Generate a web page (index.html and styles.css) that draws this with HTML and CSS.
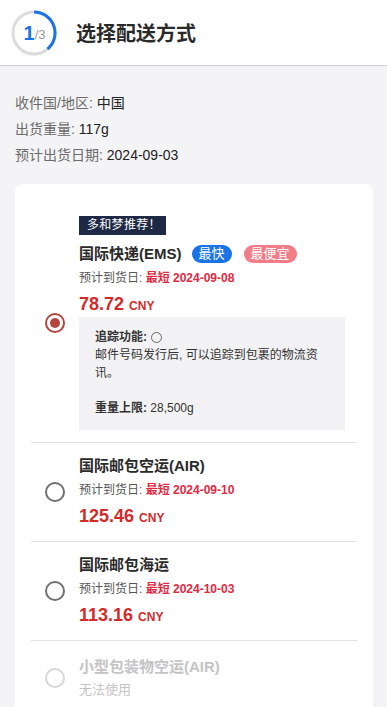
FILE: index.html
```html
<!DOCTYPE html>
<html lang="zh-CN">
<head>
<meta charset="utf-8">
<title>选择配送方式</title>
<link rel="stylesheet" href="styles.css">
</head>
<body>
<header class="header">
  <div class="step">
    <svg class="ring" width="46" height="46" viewBox="0 0 46 46">
      <circle cx="23" cy="23" r="21" fill="none" stroke="#dcdcdc" stroke-width="3"/>
      <path d="M23 2 A21 21 0 0 1 36.5 39.1" fill="none" stroke="#1a73e8" stroke-width="3"/>
    </svg>
    <span class="step-num"><b>1</b><i>/3</i></span>
  </div>
  <h1 class="title">选择配送方式</h1>
</header>
<main class="main">
  <div class="info">
    <p><span class="lbl">收件国/地区: </span>中国</p>
    <p><span class="lbl">出货重量: </span>117g</p>
    <p><span class="lbl">预计出货日期: </span>2024-09-03</p>
  </div>
  <section class="card">
    <div class="opt opt-first">
      <span class="radio radio-on"></span>
      <div class="opt-body">
        <div class="reco">多和梦推荐！</div>
        <div class="opt-title">国际快递(EMS)<span class="tag tag-blue">最快</span><span class="tag tag-pink">最便宜</span></div>
        <div class="eta">预计到货日: <em>最短 2024-09-08</em></div>
        <div class="price">78.72 <small>CNY</small></div>
        <div class="detail">
          <p class="d-head"><b>追踪功能:</b> <span class="circle"></span></p>
          <p class="d-text">邮件号码发行后, 可以追踪到包裹的物流资讯。</p>
          <p class="d-limit"><b>重量上限:</b> 28,500g</p>
        </div>
      </div>
    </div>
    <div class="opt">
      <span class="radio"></span>
      <div class="opt-body">
        <div class="opt-title">国际邮包空运(AIR)</div>
        <div class="eta">预计到货日: <em>最短 2024-09-10</em></div>
        <div class="price">125.46 <small>CNY</small></div>
      </div>
    </div>
    <div class="opt">
      <span class="radio"></span>
      <div class="opt-body">
        <div class="opt-title">国际邮包海运</div>
        <div class="eta">预计到货日: <em>最短 2024-10-03</em></div>
        <div class="price">113.16 <small>CNY</small></div>
      </div>
    </div>
    <div class="opt opt-disabled">
      <span class="radio"></span>
      <div class="opt-body">
        <div class="opt-title">小型包装物空运(AIR)</div>
        <div class="na">无法使用</div>
      </div>
    </div>
  </section>
</main>
</body>
</html>
```

FILE: styles.css
```css
* { box-sizing: border-box; }
html, body { margin: 0; padding: 0; }
body {
  font-family: "Liberation Sans", "Noto Sans CJK SC", Arial, sans-serif;
  color: #222;
  background: #f4f4f6;
  width: 387px;
  height: 707px;
  overflow: hidden;
}
p { margin: 0; }

.header {
  background: #fff;
  height: 66px;
  border-bottom: 1px solid #cfcfcf;
  display: flex;
  align-items: center;
  padding-left: 11px;
  gap: 19px;
}
.step {
  position: relative;
  width: 46px;
  height: 46px;
  margin-top: 1px;
}
.ring { display: block; }
.step-num {
  position: absolute;
  inset: 0;
  display: flex;
  align-items: center;
  justify-content: center;
  padding-left: 1px;
}
.step-num b { color: #1a73e8; font-size: 20px; font-weight: 700; }
.step-num i { color: #9a9a9a; font-size: 13px; font-style: normal; margin-top: 3px; }
.title {
  margin: 0;
  font-size: 20px;
  font-weight: 700;
  color: #2a2a2a;
}

.main {
  padding: 24px 14px 0 15px;
  height: 641px;
  overflow: hidden;
}
.info p { font-size: 14px; line-height: 26px; height: 26px; color: #222; }
.info .lbl { color: #6b6b6b; }

.card {
  margin-top: 16px;
  background: #fff;
  border-radius: 8px;
  padding: 18px 16px 8px;
}
.opt {
  display: flex;
  align-items: center;
  gap: 14px;
  padding: 13px 12px 13px 14px;
  border-bottom: 1px solid #e2e2e2;
}
.opt-first { padding-top: 14px; padding-bottom: 12px; }
.opt-disabled { border-bottom: none; padding-top: 16px; }
.radio {
  flex: none;
  width: 20px;
  height: 20px;
  border-radius: 50%;
  border: 2px solid #707070;
  display: flex;
  align-items: center;
  justify-content: center;
}
.radio-on { border-color: #b5443c; }
.radio-on::after {
  content: "";
  width: 10px;
  height: 10px;
  border-radius: 50%;
  background: #b5443c;
}
.opt-disabled .radio { border-color: #d6d6d6; }
.opt-body { flex: 1; min-width: 0; }

.reco {
  display: block;
  width: fit-content;
  height: 19px;
  background: #1e2946;
  color: #fff;
  font-size: 12px;
  line-height: 19px;
  padding: 0 5px 0 8px;
  letter-spacing: 0.3px;
  margin-bottom: 9px;
}
.opt-title {
  display: flex;
  align-items: center;
  font-size: 15px;
  font-weight: 700;
  line-height: 20px;
  height: 20px;
  color: #2a2a2a;
  margin-bottom: 4px;
}
.tag {
  display: inline-block;
  font-size: 13px;
  font-weight: 400;
  line-height: 18px;
  height: 18px;
  padding: 0 7px;
  border-radius: 9px;
  color: #fff;
  margin-left: 12px;
}
.tag-blue { background: #1a73e8; margin-left: 10px; }
.tag-pink { background: #f37d87; }
.eta {
  font-size: 12px;
  line-height: 20px;
  height: 20px;
  color: #555;
}
.eta em {
  font-style: normal;
  font-weight: 700;
  color: #e3283f;
}
.price {
  margin-top: 4px;
  font-size: 18px;
  line-height: 24px;
  height: 24px;
  font-weight: 700;
  color: #d42a2a;
}
.price small { font-size: 12px; font-weight: 700; }

.detail {
  margin-top: 1px;
  background: #f2f2f4;
  padding: 11px 16px 13px 16px;
  font-size: 12px;
  color: #333;
}
.d-head { line-height: 18px; height: 18px; display: flex; align-items: center; gap: 4px; }
.d-head b { color: #333; }
.circle {
  display: inline-block;
  width: 11px;
  height: 11px;
  border: 1px solid #666;
  border-radius: 50%;
}
.d-text { line-height: 18px; }
.d-limit { line-height: 18px; height: 18px; margin-top: 17px; }

.opt-disabled .opt-title { color: #c4c4c4; }
.na { font-size: 13px; line-height: 18px; height: 18px; color: #c4c4c4; }
```
